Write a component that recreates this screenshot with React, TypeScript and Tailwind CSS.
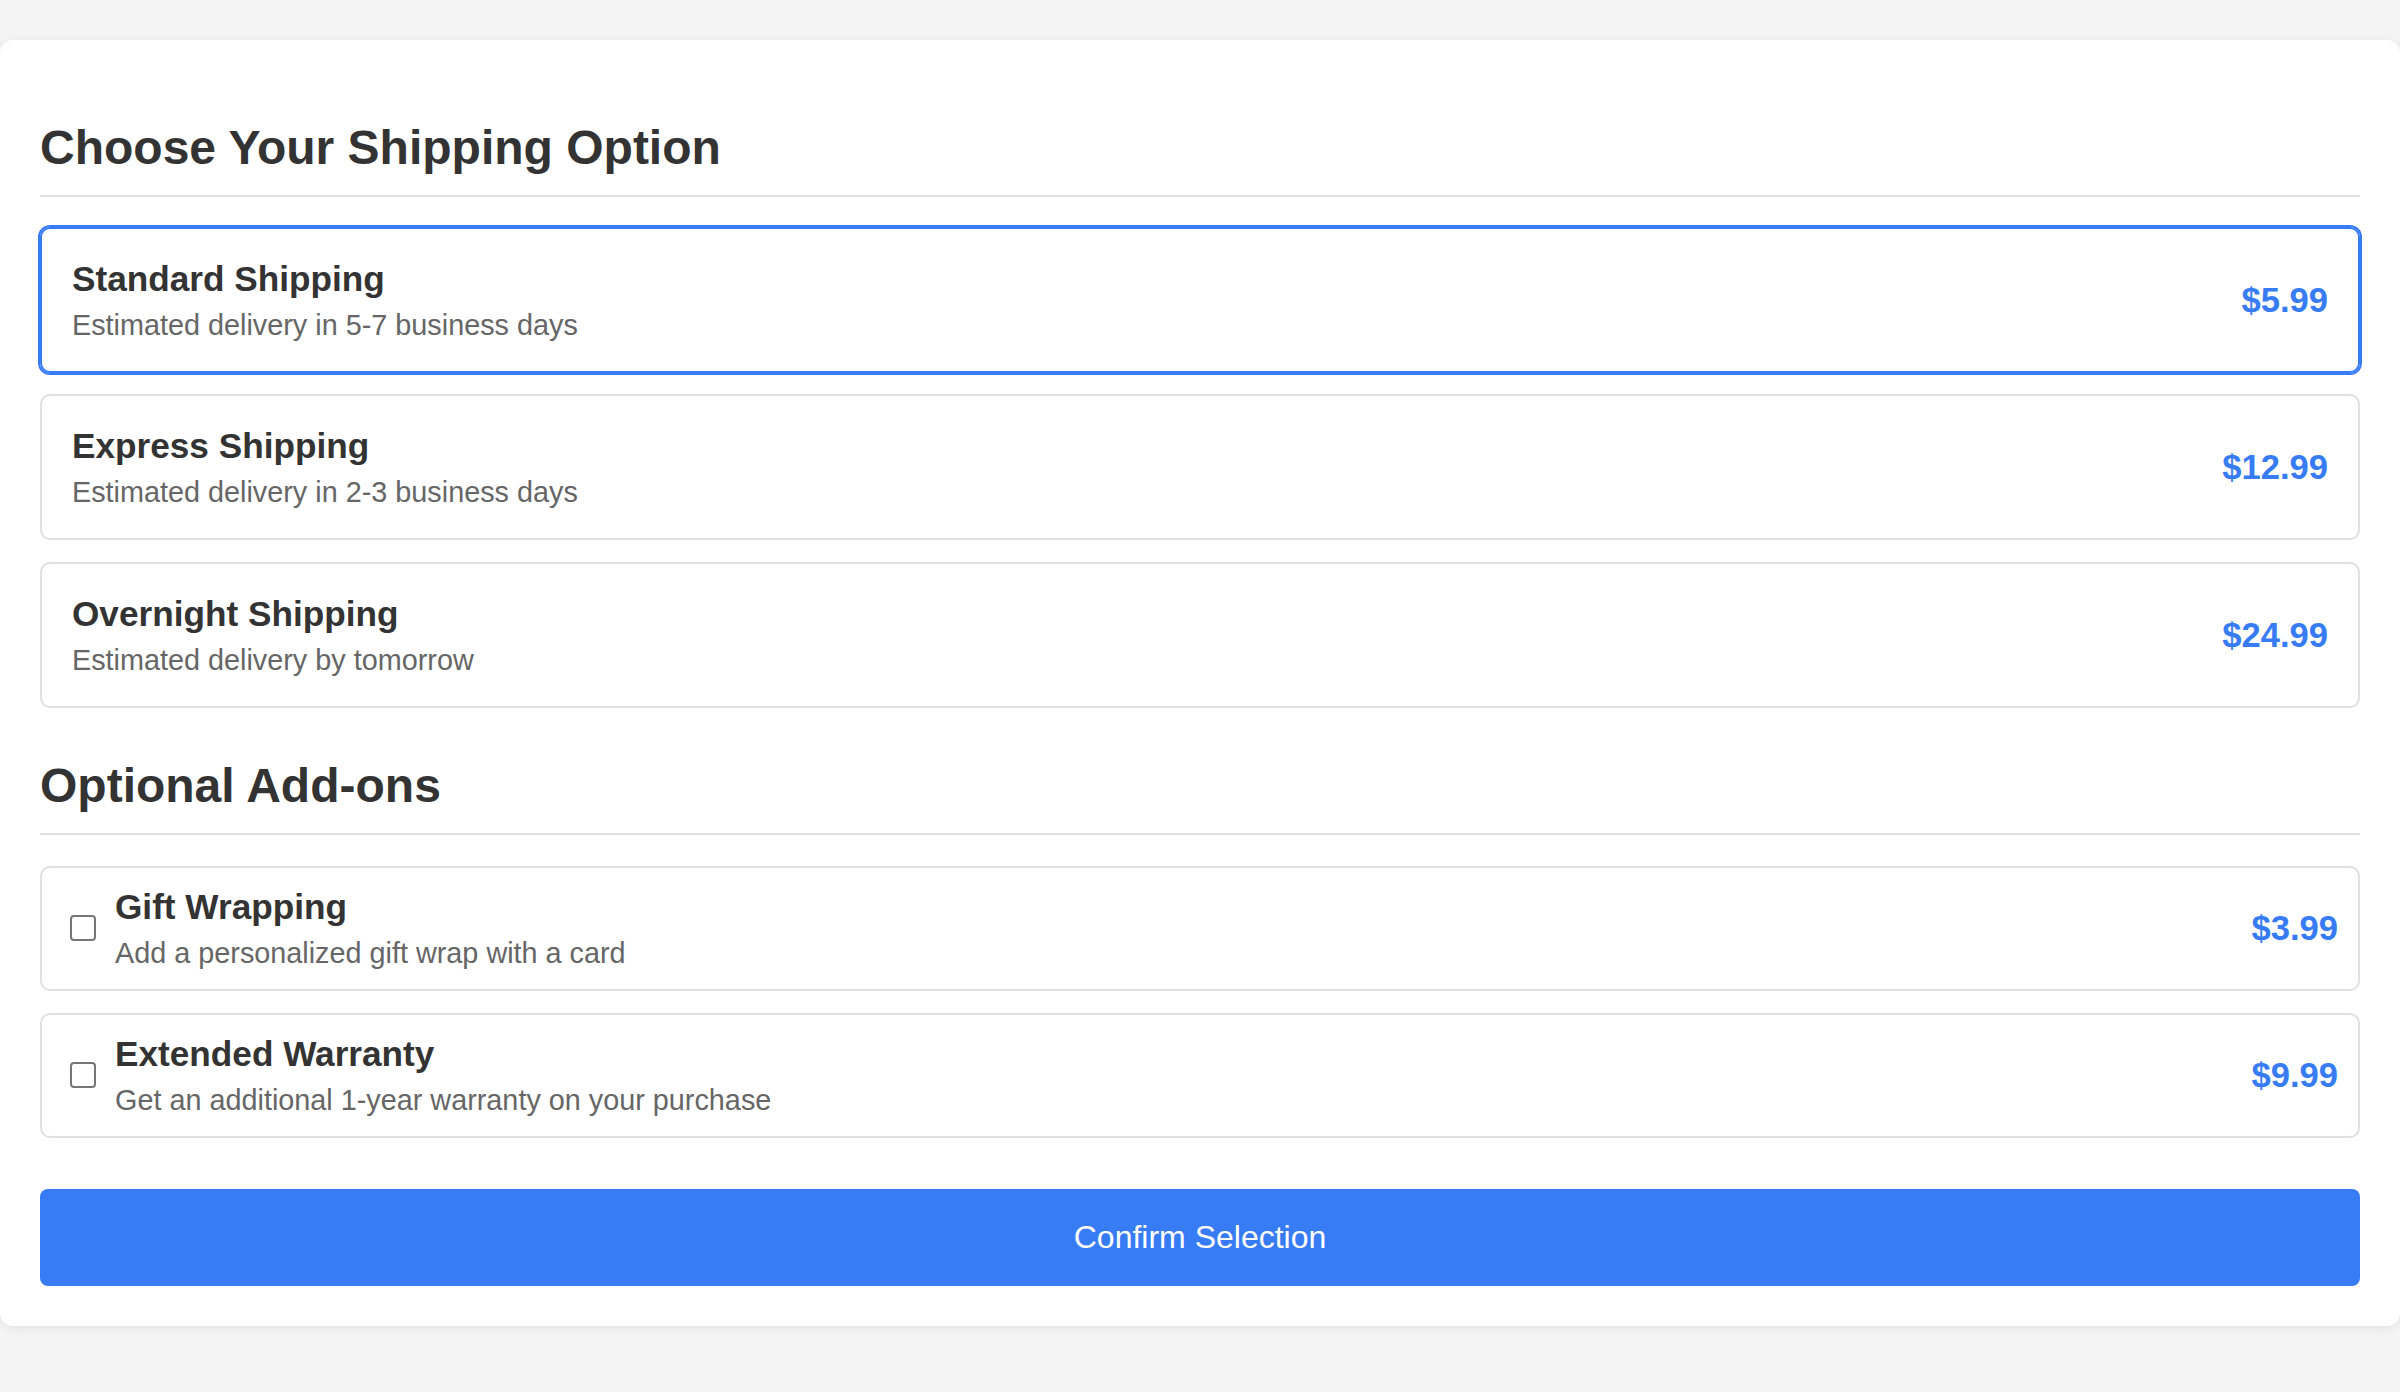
import React, { useState } from "react";

const options = [
  { id: "standard", title: "Standard Shipping", desc: "Estimated delivery in 5-7 business days", price: "$5.99" },
  { id: "express", title: "Express Shipping", desc: "Estimated delivery in 2-3 business days", price: "$12.99" },
  { id: "overnight", title: "Overnight Shipping", desc: "Estimated delivery by tomorrow", price: "$24.99" },
];

const addons = [
  { id: "gift", title: "Gift Wrapping", desc: "Add a personalized gift wrap with a card", price: "$3.99" },
  { id: "warranty", title: "Extended Warranty", desc: "Get an additional 1-year warranty on your purchase", price: "$9.99" },
];

export default function App() {
  const [selected, setSelected] = useState("standard");
  const [checked, setChecked] = useState<Record<string, boolean>>({});

  return (
    <div
      className="min-h-screen bg-[#f4f4f4] pt-[40px]"
      style={{ fontFamily: '"Liberation Sans", Arial, Helvetica, sans-serif' }}
    >
      <div className="w-full rounded-[13px] bg-white p-[40px] shadow-[0_2px_10px_rgba(0,0,0,0.08)]">
        <h2 className="mt-[41px] border-b-2 border-[#e0e0e0] pb-[20px] text-[48px] font-bold leading-[54px] text-[#333333]">
          Choose Your Shipping Option
        </h2>
        <div className="mt-[30px] flex flex-col gap-[21.4px]">
          {options.map((o) => {
            const isSel = o.id === selected;
            return (
              <div
                key={o.id}
                onClick={() => setSelected(o.id)}
                className={
                  isSel
                    ? "flex cursor-pointer items-center justify-between rounded-[10px] border-2 border-[#377bf5] px-[30px] py-[30px] shadow-[0_0_0_2px_#377bf5]"
                    : "flex cursor-pointer items-center justify-between rounded-[10px] border-2 border-[#e0e0e0] px-[30px] py-[30px]"
                }
              >
                <div className="flex flex-col gap-[10px]">
                  <div className="text-[35.2px] font-bold leading-[40px] text-[#333333]">{o.title}</div>
                  <div className="text-[28.8px] leading-[32px] text-[#666666]">{o.desc}</div>
                </div>
                <div className="text-[34.56px] font-bold leading-[40px] text-[#377bf5]">{o.price}</div>
              </div>
            );
          })}
        </div>

        <h2 className="mt-[51px] border-b-2 border-[#e0e0e0] pb-[20px] text-[48px] font-bold leading-[54px] text-[#333333]">
          Optional Add-ons
        </h2>
        <div className="mt-[31px] flex flex-col gap-[22px]">
          {addons.map((a) => (
            <label
              key={a.id}
              className="flex cursor-pointer items-center justify-between rounded-[10px] border-2 border-[#e0e0e0] px-[20px] py-[19.5px]"
            >
              <div className="flex items-center">
                <input
                  type="checkbox"
                  checked={!!checked[a.id]}
                  onChange={() => setChecked({ ...checked, [a.id]: !checked[a.id] })}
                  className="ml-[8px] mr-[19px] h-[26px] w-[26px] appearance-none rounded-[4px] border-2 border-[#767676] bg-white checked:border-[#377bf5] checked:bg-[#377bf5]"
                />
                <div className="flex flex-col gap-[10px]">
                  <div className="text-[35.2px] font-bold leading-[40px] text-[#333333]">{a.title}</div>
                  <div className="text-[28.8px] leading-[32px] text-[#666666]">{a.desc}</div>
                </div>
              </div>
              <div className="text-[34.56px] font-bold leading-[40px] text-[#377bf5]">{a.price}</div>
            </label>
          ))}
        </div>

        <button className="mt-[51px] flex h-[97px] w-full items-center justify-center rounded-[8px] bg-[#377bf5] text-[32px] text-white">
          Confirm Selection
        </button>
      </div>
    </div>
  );
}
